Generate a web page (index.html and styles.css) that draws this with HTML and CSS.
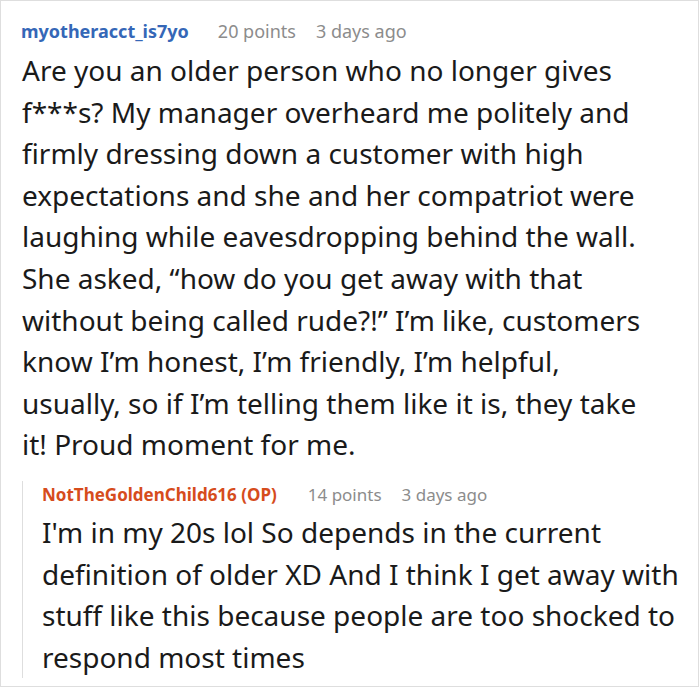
FILE: index.html
```html
<!DOCTYPE html>
<html>
<head>
<meta charset="utf-8">
<link rel="stylesheet" href="styles.css">
</head>
<body>
<div class="frame">
  <div class="comment">
    <div class="meta">
      <span class="author">myotheracct_is7yo</span>
      <span class="info">20 points</span>
      <span class="info">3 days ago</span>
    </div>
    <p class="text main-text">Are you an older person who no longer gives f***s? My manager overheard me politely and firmly dressing down a customer with high expectations and she and her compatriot were laughing while eavesdropping behind the wall. She asked, “how do you get away with that without being called rude?!” I’m like, customers know I’m honest, I’m friendly, I’m helpful, usually, so if I’m telling them like it is, they take it! Proud moment for me.</p>
    <div class="reply">
      <div class="meta reply-meta">
        <span class="author op">NotTheGoldenChild616 (OP)</span>
        <span class="info">14 points</span>
        <span class="info">3 days ago</span>
      </div>
      <p class="text reply-text">I'm in my 20s lol So depends in the current definition of older XD And I think I get away with stuff like this because people are too shocked to respond most times</p>
    </div>
  </div>
</div>
</body>
</html>
```
FILE: styles.css
```css
html, body {
  margin: 0;
  padding: 0;
  background: #fff;
}
.frame {
  width: 699px;
  height: 687px;
  box-sizing: border-box;
  border: 1px solid #dedede;
  overflow: hidden;
  font-family: "Noto Sans", sans-serif;
  color: #1a1a1a;
}
.comment {
  padding: 16px 0 0 20px;
}
.meta {
  display: flex;
  gap: 20px;
  font-size: 18px;
  line-height: 28px;
}
.author {
  font-weight: bold;
  color: #3567b7;
  margin-right: 9px;
}
.author.op {
  color: #d64c1c;
}
.info {
  color: #8c8c8c;
}
.text {
  margin: 0;
  font-size: 28px;
  line-height: 41.6px;
}
.main-text {
  margin-top: 5px;
  padding-left: 1px;
  width: 632px;
}
.reply {
  margin-top: 27px;
  margin-left: 1px;
  padding: 0 0 0 19px;
  border-left: 1px solid #dedede;
}
.reply-meta {
  margin-top: -12px;
  font-size: 17px;
}
.reply-meta .author {
  margin-right: 11px;
}
.reply-text {
  margin-top: 3px;
  margin-bottom: -9px;
  width: 645px;
}
```
